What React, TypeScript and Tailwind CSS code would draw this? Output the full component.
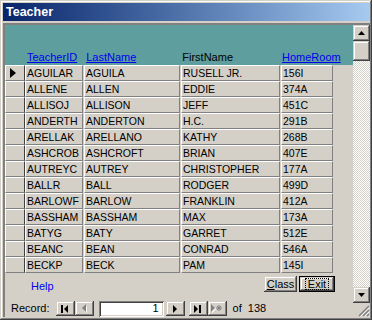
import React from "react";

const rows: string[][] = [
  ["AGUILAR", "AGUILA", "RUSELL JR.", "156I"],
  ["ALLENE", "ALLEN", "EDDIE", "374A"],
  ["ALLISOJ", "ALLISON", "JEFF", "451C"],
  ["ANDERTH", "ANDERTON", "H.C.", "291B"],
  ["ARELLAK", "ARELLANO", "KATHY", "268B"],
  ["ASHCROB", "ASHCROFT", "BRIAN", "407E"],
  ["AUTREYC", "AUTREY", "CHRISTOPHER", "177A"],
  ["BALLR", "BALL", "RODGER", "499D"],
  ["BARLOWF", "BARLOW", "FRANKLIN", "412A"],
  ["BASSHAM", "BASSHAM", "MAX", "173A"],
  ["BATYG", "BATY", "GARRET", "512E"],
  ["BEANC", "BEAN", "CONRAD", "546A"],
  ["BECKP", "BECK", "PAM", "145I"],
];

// win2k style 3d edges
const raised =
  "bg-[#d4d0c8] shadow-[inset_-1px_-1px_0_#404040,inset_1px_1px_0_#d4d0c8,inset_-2px_-2px_0_#808080,inset_2px_2px_0_#ffffff]";
const sunken =
  "shadow-[inset_1px_1px_0_#808080,inset_-1px_-1px_0_#ffffff,inset_2px_2px_0_#404040,inset_-2px_-2px_0_#d4d0c8]";

function Cell({ w, text }: { w: string; text: string }) {
  return (
    <div
      className={`${w} h-[16px] shrink-0 border-t border-l border-white border-r border-b border-r-[#808080] border-b-[#808080] bg-[#d4d0c8] pl-[1px] text-[10.5px] leading-[14px] text-black whitespace-nowrap overflow-hidden`}
    >
      {text}
    </div>
  );
}

function NavBtn({ children }: { children: React.ReactNode }) {
  return (
    <div className={`${raised} w-[19px] h-[15px] flex items-center justify-center`}>
      {children}
    </div>
  );
}

export default function App() {
  return (
    <div className="w-[372px] h-[320px] bg-[#d4d0c8] font-['Liberation_Sans',Arial,sans-serif] shadow-[inset_-1px_-1px_0_#404040,inset_1px_1px_0_#d4d0c8,inset_-2px_-2px_0_#808080,inset_2px_2px_0_#ffffff] pl-[3px] pt-[3px] pr-[2px] pb-[3px] flex flex-col">
      {/* title bar */}
      <div className="h-[18px] bg-linear-to-r from-[#0a246a] to-[#a6caf0] flex items-center pl-[3px] text-white font-bold text-[12.5px]">
        Teacher
      </div>

      {/* client */}
      <div className="mt-[2px] flex-1 flex border-t-2 border-l-2 border-t-[#808080] border-l-[#808080] min-h-0">
        <div className="flex-1 flex flex-col min-w-0">
          {/* header section */}
          <div className="h-[40px] bg-[#5f9e9e] flex items-end pb-[1px] text-[11px] leading-[14px]">
            <span className="ml-[22px] text-[#0000ee] underline">TeacherID</span>
            <span className="ml-[9px] text-[#0000ee] underline">LastName</span>
            <span className="ml-[46px] text-black">FirstName</span>
            <span className="ml-[49px] text-[#0000ee] underline">HomeRoom</span>
          </div>

          {/* detail rows */}
          <div className="flex flex-col">
            {rows.map((r, i) => (
              <div key={i} className="flex h-[16px]">
                <div className="w-[20px] h-[16px] shrink-0 border-t border-l border-white border-r border-b border-r-[#404040] border-b-[#808080] flex items-center pl-[4px]">
                  {i === 0 && (
                    <svg width="6" height="10" viewBox="0 0 6 10">
                      <path d="M0 0 L6 5 L0 10 Z" fill="#000" />
                    </svg>
                  )}
                </div>
                <Cell w="w-[58px]" text={r[0]} />
                <div className="w-[1px]" />
                <Cell w="w-[96px]" text={r[1]} />
                <div className="w-[1px]" />
                <Cell w="w-[99px]" text={r[2]} />
                <div className="w-[1px]" />
                <Cell w="w-[52px]" text={r[3]} />
              </div>
            ))}
          </div>

          {/* form footer */}
          <div className="flex-1 flex items-start">
            <span className="ml-[26px] mt-[5px] text-[11px] text-[#0000ee]">Help</span>
            <div className="ml-auto mr-[18px] mt-[3px] flex gap-[2px]">
              <div className={`${raised} w-[33px] h-[16px] flex items-center justify-center text-[11px] text-black`}>
                <span>
                  <span className="underline">C</span>lass
                </span>
              </div>
              <div className="w-[36px] h-[16px] border border-black">
                <div className={`${raised} w-full h-full flex items-center justify-center`}>
                  <span className="border border-dotted border-black px-[2px] leading-[10px] text-[11px] text-black">
                    Exit
                  </span>
                </div>
              </div>
            </div>
          </div>

          {/* record navigation */}
          <div className="h-[17px] flex items-center text-[11px] text-black">
            <span className="ml-[6px] mr-[6px]">Record:</span>
            <NavBtn>
              <svg width="8" height="8" viewBox="0 0 8 8">
                <rect x="0" y="0" width="2" height="8" fill="#000" />
                <path d="M7 0 L3 4 L7 8 Z" fill="#000" />
              </svg>
            </NavBtn>
            <NavBtn>
              <svg width="6" height="9" viewBox="0 0 6 9">
                <path d="M5 1 L1.5 4.5 L5 8 Z" fill="#ffffff" transform="translate(1 1)" />
                <path d="M5 0 L1 4 L5 8 Z" fill="#808080" />
              </svg>
            </NavBtn>
            <div className={`${sunken} bg-white w-[65px] h-[16px] ml-[5px] mr-[2px] flex items-center justify-end pr-[5px]`}>
              1
            </div>
            <NavBtn>
              <svg width="5" height="8" viewBox="0 0 5 8">
                <path d="M0 0 L4 4 L0 8 Z" fill="#000" />
              </svg>
            </NavBtn>
            <div className="w-[4px]" />
            <NavBtn>
              <svg width="8" height="8" viewBox="0 0 8 8">
                <path d="M0 0 L4 4 L0 8 Z" fill="#000" />
                <rect x="5" y="0" width="2" height="8" fill="#000" />
              </svg>
            </NavBtn>
            <NavBtn>
              <svg width="12" height="9" viewBox="0 0 12 9">
                <path d="M1 1 L5 5 L1 9 Z" fill="#ffffff" />
                <path d="M0 0 L4 4 L0 8 Z" fill="#808080" />
                <path d="M8 1 V7 M5 4 H11 M6 2 L10 6 M10 2 L6 6" stroke="#808080" strokeWidth="1" />
              </svg>
            </NavBtn>
            <span className="ml-[6px]">of&nbsp;&nbsp;138</span>
          </div>
        </div>

        {/* vertical scrollbar */}
        <div className="w-[17px] flex flex-col">
          <div className={`${raised} h-[16px] flex items-center justify-center`}>
            <svg width="7" height="4" viewBox="0 0 7 4">
              <path d="M3.5 0 L7 4 L0 4 Z" fill="#000" />
            </svg>
          </div>
          <div className={`${raised} h-[20px]`} />
          <div className="flex-1 bg-[repeating-conic-gradient(#ffffff_0_25%,#d4d0c8_0_50%)] bg-[length:2px_2px]" />
          <div className={`${raised} h-[16px] flex items-center justify-center`}>
            <svg width="7" height="4" viewBox="0 0 7 4">
              <path d="M0 0 L7 0 L3.5 4 Z" fill="#000" />
            </svg>
          </div>
          <div className="h-[14px] flex items-end justify-end">
            <svg width="12" height="12" viewBox="0 0 12 12">
              <path d="M11 1 L1 11 M11 5 L5 11 M11 9 L9 11" stroke="#808080" strokeWidth="1.5" />
              <path d="M11.5 2.5 L2.5 11.5 M11.5 6.5 L6.5 11.5 M11.5 10.5 L10.5 11.5" stroke="#ffffff" strokeWidth="0.8" />
            </svg>
          </div>
        </div>
      </div>
    </div>
  );
}
